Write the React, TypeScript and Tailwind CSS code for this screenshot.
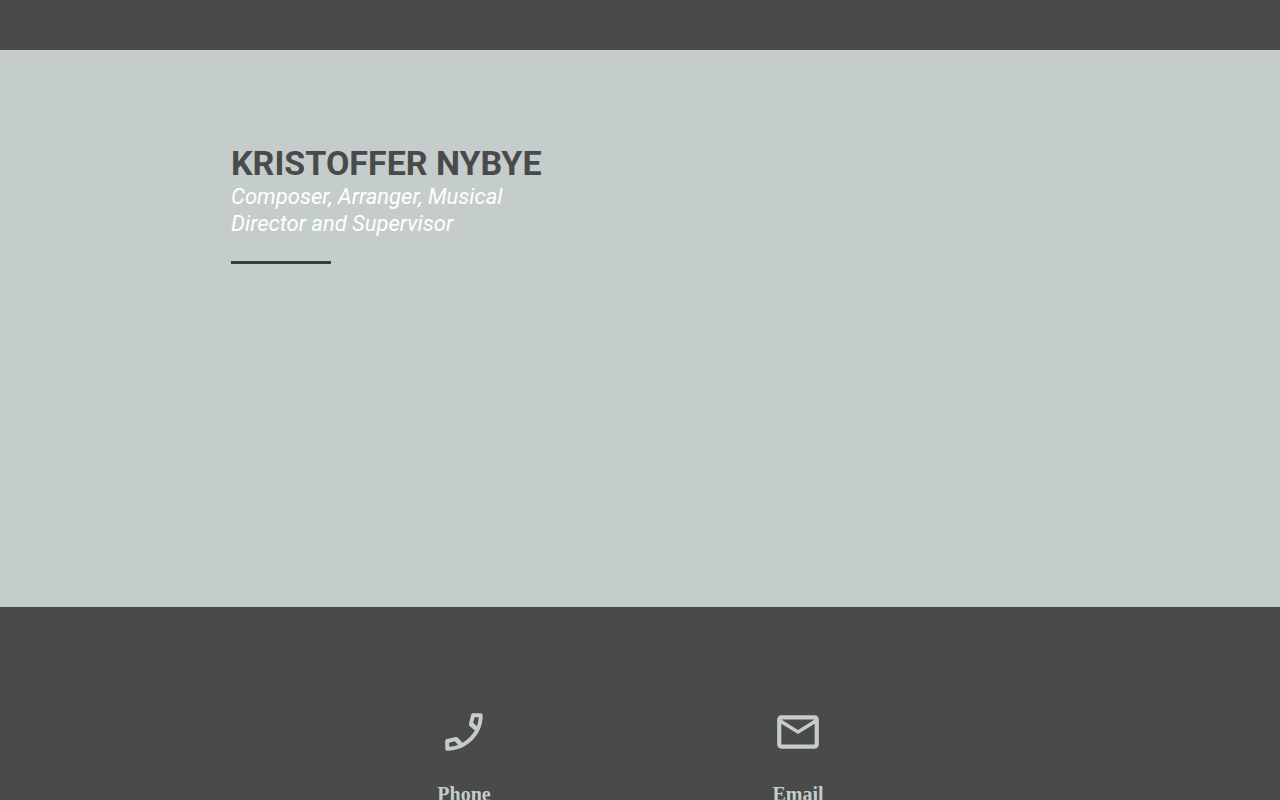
import { MdMailOutline } from "react-icons/md";

function PhoneIcon({ className }: { className?: string }) {
  return (
    <svg viewBox="0 0 24 24" fill="currentColor" fillRule="evenodd" className={className}>
      <path d="M20 3h-3.6c-.5 0-.9.3-1 .8l-1 4.2c-.1.4 0 .8.3 1.1l2.5 2.2c-1.4 2.4-3.5 4.5-5.9 5.9l-2.2-2.5c-.3-.3-.7-.4-1.1-.3l-4.2.9c-.5.1-.8.5-.8 1V20c0 .6.4 1 1 1 9.4 0 17-7.6 17-17 0-.6-.4-1-1-1zM17.1 4.9h2c-.1 1.4-.4 2.9-.9 4.3l-1.8-1.7zM4.9 17.1l2.6-.7 1.7 1.8c-1.4.5-2.9.8-4.3.9z" />
    </svg>
  );
}

const contacts = [
  { icon: PhoneIcon, title: "Phone" },
  { icon: MdMailOutline, title: "Email" },
];

function Hero() {
  return (
    <section className="min-h-[557px] bg-[#c4cdcc] pr-[18px] pt-24">
      <div className="mx-auto max-w-[800px] font-['Roboto',sans-serif]">
        <h1 className="text-[34px] leading-[34px] font-bold text-[#4a4a4a]">KRISTOFFER NYBYE</h1>
        <p className="mt-[3px] max-w-[312px] text-[22px] leading-[27px] italic text-white">
          Composer, Arranger, Musical Director and Supervisor
        </p>
        <hr className="mt-6 w-[100px] border-t-3 border-[#3a3f3f]" />
      </div>
    </section>
  );
}

function Contact() {
  return (
    <section className="bg-[#4a4a4a] pr-[18px] pt-[100px] pb-16">
      <div className="mx-auto grid max-w-[668px] grid-cols-2">
        {contacts.map((contact) => (
          <div key={contact.title} className="flex flex-col items-center gap-[25px] text-[#c4cdcc]">
            <contact.icon className="size-[50px]" />
            <h2 className="font-['Liberation_Serif',serif] text-xl leading-6 font-bold">
              {contact.title}
            </h2>
          </div>
        ))}
      </div>
    </section>
  );
}

export default function App() {
  return (
    <div className="min-h-screen bg-[#4a4a4a] antialiased">
      <header className="h-[50px] bg-[#4a4a4a]" />
      <main>
        <Hero />
        <Contact />
      </main>
    </div>
  );
}
